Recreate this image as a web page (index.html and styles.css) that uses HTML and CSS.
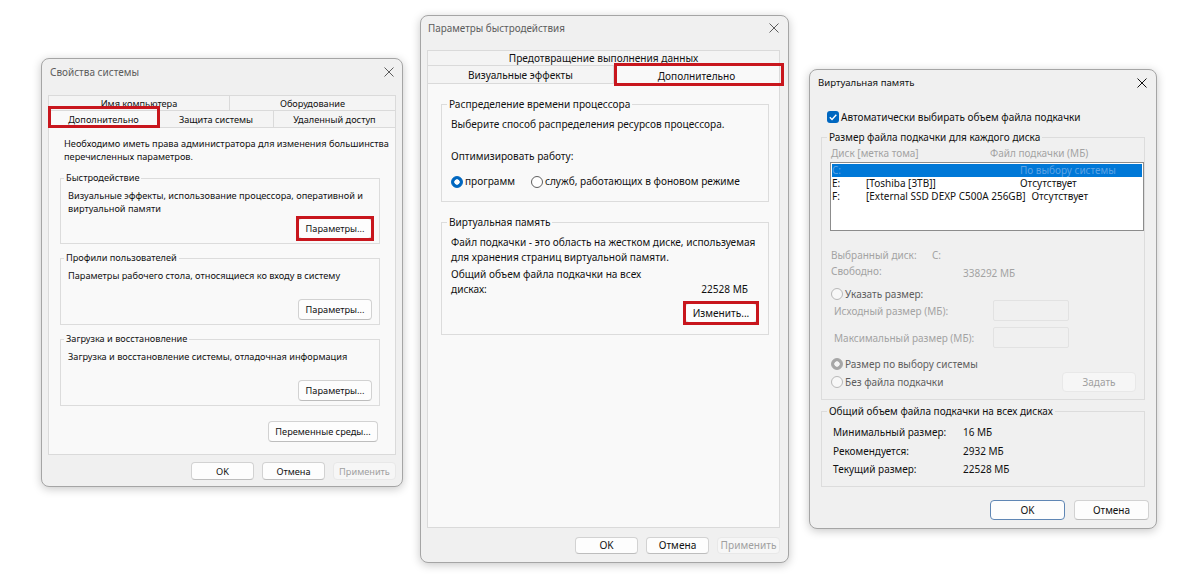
FILE: index.html
```html
<!DOCTYPE html>
<html lang="ru">
<head>
    <meta charset="UTF-8">
    <meta name="viewport" content="width=device-width, initial-scale=1.0">
    <title>Быстродействие и виртуальная память</title>
    <link rel="stylesheet" href="styles.css">
</head>
<body>
<div class="desktop">

    <!-- Свойства системы -->
    <div class="window sys">
        <div class="titlebar">
            <span class="caption">Свойства системы</span>
            <svg class="close" viewBox="0 0 10 10" width="10" height="10"><path d="M0.5 0.5L9.5 9.5M9.5 0.5L0.5 9.5"/></svg>
        </div>
        <div class="body">
            <div class="tabs">
                <div class="tab-row tab-back">
                    <div class="tab">Имя компьютера</div>
                    <div class="tab">Оборудование</div>
                </div>
                <div class="tab-row tab-front">
                    <div class="tab selected">Дополнительно<span class="mark"></span></div>
                    <div class="tab">Защита системы</div>
                    <div class="tab">Удаленный доступ</div>
                </div>
            </div>
            <div class="panel">
                <p class="intro">Необходимо иметь права администратора для изменения большинства<br>перечисленных параметров.</p>

                <div class="group first">
                    <div class="group-title">Быстродействие</div>
                    <p class="group-text">Визуальные эффекты, использование процессора, оперативной и<br>виртуальной памяти</p>
                    <button class="btn">Параметры...<span class="mark"></span></button>
                </div>

                <div class="group">
                    <div class="group-title">Профили пользователей</div>
                    <p class="group-text">Параметры рабочего стола, относящиеся ко входу в систему</p>
                    <button class="btn">Параметры...</button>
                </div>

                <div class="group">
                    <div class="group-title">Загрузка и восстановление</div>
                    <p class="group-text">Загрузка и восстановление системы, отладочная информация</p>
                    <button class="btn">Параметры...</button>
                </div>

                <button class="btn env-btn">Переменные среды...</button>
            </div>
            <div class="footer">
                <button class="btn">OK</button>
                <button class="btn">Отмена</button>
                <button class="btn" disabled>Применить</button>
            </div>
        </div>
    </div>

    <!-- Параметры быстродействия -->
    <div class="window perf">
        <div class="titlebar">
            <span class="caption">Параметры быстродействия</span>
            <svg class="close" viewBox="0 0 10 10" width="10" height="10"><path d="M0.5 0.5L9.5 9.5M9.5 0.5L0.5 9.5"/></svg>
        </div>
        <div class="body">
            <div class="tabs">
                <div class="tab-row tab-back">
                    <div class="tab">Предотвращение выполнения данных</div>
                </div>
                <div class="tab-row tab-front">
                    <div class="tab">Визуальные эффекты</div>
                    <div class="tab selected">Дополнительно<span class="mark"></span></div>
                </div>
            </div>
            <div class="panel">
                <div class="group">
                    <div class="group-title">Распределение времени процессора</div>
                    <p class="group-text">Выберите способ распределения ресурсов процессора.</p>
                    <p class="optimize">Оптимизировать работу:</p>
                    <div class="radio-row">
                        <label class="radio"><span class="radio-dot on"></span>программ</label>
                        <label class="radio"><span class="radio-dot"></span>служб, работающих в фоновом режиме</label>
                    </div>
                </div>

                <div class="group">
                    <div class="group-title">Виртуальная память</div>
                    <p class="group-text">Файл подкачки - это область на жестком диске, используемая<br>для хранения страниц виртуальной памяти.</p>
                    <div class="total">
                        <span class="total-label">Общий объем файла подкачки на всех<br>дисках:</span>
                        <span class="total-value">22528 МБ</span>
                    </div>
                    <button class="btn">Изменить...<span class="mark"></span></button>
                </div>
            </div>
            <div class="footer">
                <button class="btn">OK</button>
                <button class="btn">Отмена</button>
                <button class="btn" disabled>Применить</button>
            </div>
        </div>
    </div>

    <!-- Виртуальная память -->
    <div class="window vm">
        <div class="titlebar">
            <span class="caption">Виртуальная память</span>
            <svg class="close" viewBox="0 0 10 10" width="10" height="10"><path d="M0.5 0.5L9.5 9.5M9.5 0.5L0.5 9.5"/></svg>
        </div>
        <div class="body">
            <label class="check">
                <span class="check-box"><svg viewBox="0 0 12 12" width="12" height="12"><path d="M2.8 6.3L5 8.4L9.3 3.8"/></svg></span>
                Автоматически выбирать объем файла подкачки
            </label>

            <div class="group">
                <div class="group-title">Размер файла подкачки для каждого диска</div>
                <div class="cols">
                    <span class="col-head">Диск [метка тома]</span>
                    <span>Файл подкачки (МБ)</span>
                </div>
                <div class="list">
                    <div class="list-row selected">
                        <span class="col-drive">C:</span>
                        <span class="col-label"></span>
                        <span>По выбору системы</span>
                    </div>
                    <div class="list-row">
                        <span class="col-drive">E:</span>
                        <span class="col-label">[Toshiba [3TB]]</span>
                        <span>Отсутствует</span>
                    </div>
                    <div class="list-row">
                        <span class="col-drive">F:</span>
                        <span class="col-label">[External SSD DEXP C500A 256GB]</span>
                        <span>Отсутствует</span>
                    </div>
                </div>

                <div class="info">
                    <div class="info-row"><span class="info-drive">Выбранный диск:</span><span>C:</span></div>
                    <div class="info-row"><span class="info-free">Свободно:</span><span class="info-value">338292 МБ</span></div>
                </div>

                <label class="radio custom"><span class="radio-dot off"></span>Указать размер:</label>
                <div class="size-row first">
                    <span class="size-label">Исходный размер (МБ):</span>
                    <span class="size-input"></span>
                </div>
                <div class="size-row">
                    <span class="size-label">Максимальный размер (МБ):</span>
                    <span class="size-input"></span>
                </div>
                <label class="radio system"><span class="radio-dot grey"></span>Размер по выбору системы</label>
                <div class="none-row">
                    <label class="radio"><span class="radio-dot off"></span>Без файла подкачки</label>
                    <button class="btn" disabled>Задать</button>
                </div>
            </div>

            <div class="group totals">
                <div class="group-title">Общий объем файла подкачки на всех дисках</div>
                <div class="total-rows">
                    <div class="total-row"><span class="total-name">Минимальный размер:</span><span>16 МБ</span></div>
                    <div class="total-row"><span class="total-name">Рекомендуется:</span><span>2932 МБ</span></div>
                    <div class="total-row"><span class="total-name">Текущий размер:</span><span>22528 МБ</span></div>
                </div>
            </div>

            <div class="footer">
                <button class="btn default">OK</button>
                <button class="btn">Отмена</button>
            </div>
        </div>
    </div>

</div>
</body>
</html>
```

FILE: styles.css
```css
/* Base */
* {
    margin: 0;
    padding: 0;
    box-sizing: border-box;
}

body {
    background-color: #fff;
    font-family: "Noto Sans", "Liberation Sans", sans-serif;
    color: #111;
}

.desktop {
    position: relative;
    width: 1200px;
    height: 581px;
    overflow: hidden;
}

/* Windows */
.window {
    position: absolute;
    background-color: #f0f0f0;
    border: 1px solid #a5a5a5;
    border-radius: 8px;
    box-shadow: 0 2px 10px rgba(0, 0, 0, 0.22);
}

.sys {
    left: 41px;
    top: 58px;
    width: 362px;
    height: 429px;
    font-size: 9.2px;
    line-height: 13px;
}

.perf {
    left: 420px;
    top: 15px;
    width: 369px;
    height: 548px;
    font-size: 10.1px;
    line-height: 15px;
}

.vm {
    left: 809px;
    top: 69px;
    width: 348px;
    height: 460px;
    font-size: 10px;
    line-height: 16px;
}

/* Title bar */
.titlebar {
    display: flex;
    align-items: center;
    justify-content: space-between;
    color: #5c5c5c;
}

.sys .titlebar {
    height: 30px;
    padding: 0 8px 4px;
    font-size: 10px;
}

.perf .titlebar {
    height: 28px;
    padding: 0 9px 4px 7px;
    font-size: 9.9px;
}

.vm .titlebar {
    height: 26px;
    padding: 0 9px 0 8px;
    font-size: 9.6px;
    color: #111;
}

.close {
    stroke: currentColor;
    stroke-width: 1;
    fill: none;
}

/* Body */
.sys .body {
    padding: 6px 6px 0;
}

.perf .body {
    padding: 6px 8px 0 6px;
}

.vm .body {
    padding: 0 7px 0 11px;
}

/* Tabs */
.tab-row {
    display: grid;
}

.sys .tab-back {
    grid-template-columns: 181px 1fr;
    height: 15px;
}

.sys .tab-front {
    grid-template-columns: 110px 115px 1fr;
    height: 17px;
}

.perf .tab-back {
    grid-template-columns: 1fr;
    height: 15px;
}

.perf .tab-front {
    grid-template-columns: 186px 1fr;
    height: 18px;
}

.perf .tab-front .tab {
    padding-top: 2px;
}

.tab {
    position: relative;
    display: flex;
    align-items: center;
    justify-content: center;
    white-space: nowrap;
    background-color: #f4f4f4;
    border: 1px solid #dadada;
    border-bottom: none;
    margin-right: -1px;
}

.tab:last-child {
    margin-right: 0;
}

.tab.selected {
    z-index: 1;
    background-color: #f9f9f9;
    margin-bottom: -1px;
}

/* Red annotation frames */
.mark {
    position: absolute;
    border: 3px solid #c8161d;
    pointer-events: none;
}

.sys .tab .mark {
    top: -5px;
    right: -2px;
    bottom: 0;
    left: -1px;
}

.perf .tab .mark {
    top: -3px;
    right: -5px;
    bottom: -2px;
    left: 0;
}

.btn .mark {
    top: -3px;
    right: -3px;
    bottom: -3px;
    left: -3px;
}

/* Tab panel */
.panel {
    background-color: #f9f9f9;
    border: 1px solid #dadada;
}

.sys .panel {
    height: 328px;
    padding: 9px 15px 0 11px;
}

.perf .panel {
    height: 445px;
    padding: 20px 10px 0 13px;
}

.intro {
    margin-left: 4px;
    white-space: nowrap;
}

/* Group boxes */
.group {
    display: flex;
    flex-direction: column;
    border: 1px solid #dcdcdc;
    background-color: #f9f9f9;
}

.group-title {
    width: fit-content;
    margin: -8px 0 0 -4px;
    padding: 0 2px;
    background: inherit;
    white-space: nowrap;
}

.group-text {
    margin-top: 5px;
    white-space: nowrap;
}

.sys .group {
    height: 67px;
    margin-top: 14px;
    padding: 0 7px 4px;
}

.sys .group.first {
    height: 66px;
    margin-top: 15px;
}

.sys .group .btn {
    align-self: flex-end;
    margin-top: auto;
    width: 74px;
    height: 21px;
}

.env-btn {
    width: 110px;
    height: 21px;
    margin: 15px 2px 0 auto;
}

.perf .group {
    padding: 0 9px 12px;
}

.perf .group + .group {
    margin-top: 20px;
    padding-bottom: 11px;
}

.optimize {
    margin-top: 17px;
}

.radio-row {
    display: flex;
    margin-top: 10px;
}

.radio {
    display: flex;
    align-items: center;
    gap: 2px;
    white-space: nowrap;
}

.radio-row .radio + .radio {
    margin-left: 16px;
}

.radio-dot {
    width: 12px;
    height: 12px;
    border-radius: 50%;
    border: 1px solid #5f5f5f;
    background-color: #fff;
    flex-shrink: 0;
}

.radio-dot.on {
    border-color: #0067c0;
    background: radial-gradient(circle, #fff 0 2.4px, #0067c0 3px);
}

.radio-dot.off {
    border-color: #b8b8b8;
    background-color: #f7f7f7;
}

.radio-dot.grey {
    border-color: #a6a6a6;
    background: radial-gradient(circle, #f4f4f4 0 2.4px, #a6a6a6 3px);
}

.total {
    display: flex;
    justify-content: space-between;
    align-items: flex-end;
    margin-top: 2px;
    padding-right: 11px;
}

.perf .group .btn {
    align-self: flex-end;
    width: 72px;
    height: 20px;
    margin: 6px 2px 0 0;
}

/* Buttons */
.btn {
    position: relative;
    display: flex;
    align-items: center;
    justify-content: center;
    font: inherit;
    color: #111;
    background-color: #fdfdfd;
    border: 1px solid #d2d2d2;
    border-bottom-color: #bdbdbd;
    border-radius: 4px;
    white-space: nowrap;
}

.btn:disabled {
    color: #a0a0a0;
    background-color: #f6f6f6;
    border-color: #e8e8e8;
}

.btn.default {
    border-color: #5f86b4;
}

.footer {
    display: flex;
    justify-content: flex-end;
    gap: 8px;
}

.sys .footer {
    margin-top: 7px;
}

.sys .footer .btn {
    width: 63px;
    height: 18px;
}

.perf .footer {
    margin-top: 9px;
}

.perf .footer .btn {
    width: 63px;
    height: 17px;
}

.vm .footer {
    margin-top: 13px;
    gap: 9px;
}

.vm .footer .btn {
    width: 75px;
    height: 20px;
}

/* Virtual memory dialog */
.check {
    display: flex;
    align-items: center;
    gap: 2px;
    margin: 13px 0 0 6px;
    white-space: nowrap;
}

.check-box {
    display: flex;
    width: 12px;
    height: 12px;
    border-radius: 3px;
    background-color: #0067c0;
}

.check-box path {
    fill: none;
    stroke: #fff;
    stroke-width: 1.4;
}

.vm .group {
    margin: 12px 4px 0 0;
    padding: 0 0 7px 9px;
    background-color: #f0f0f0;
}

.vm .group-title {
    margin-top: -9px;
}

.cols {
    display: flex;
    color: #a3a3a3;
    white-space: nowrap;
}

.col-head {
    width: 159px;
}

.list {
    height: 69px;
    margin: 1px 0 0 -1px;
    padding: 1px;
    border: 1px solid #8c8c8c;
    background-color: #fff;
    line-height: 13px;
}

.list-row {
    display: flex;
    height: 13px;
    white-space: nowrap;
}

.list-row.selected {
    background-color: #0078d7;
    color: #5ea3e4;
}

.col-drive {
    width: 34px;
}

.col-label {
    min-width: 154px;
    padding-right: 6px;
}

.info {
    margin-top: 16px;
    color: #a3a3a3;
}

.info-row {
    display: flex;
    white-space: nowrap;
}

.info-drive {
    width: 101px;
}

.info-free {
    width: 132px;
}

.info-value {
    padding-top: 2px;
}

.vm .radio {
    color: #5e5e5e;
}

.radio.custom {
    margin-top: 5px;
}

.size-row {
    display: flex;
    align-items: center;
    height: 21px;
    margin: 6px 0 0 3px;
    color: #a3a3a3;
    white-space: nowrap;
}

.size-row.first {
    margin-top: -2px;
}

.size-label {
    width: 159px;
}

.size-input {
    width: 76px;
    height: 21px;
    background-color: #f0f0f0;
    border: 1px solid #e2e2e2;
    border-radius: 2px;
}

.radio.system {
    margin-top: 8px;
}

.none-row {
    display: flex;
    align-items: center;
    justify-content: space-between;
    height: 20px;
}

.none-row .btn {
    width: 74px;
    height: 20px;
    margin-right: 8px;
}

.vm .totals {
    margin-top: 11px;
}

.total-rows {
    margin: 4px 0 0 2px;
    line-height: 18.5px;
}

.total-row {
    display: flex;
    white-space: nowrap;
}

.total-name {
    width: 130px;
}
```
